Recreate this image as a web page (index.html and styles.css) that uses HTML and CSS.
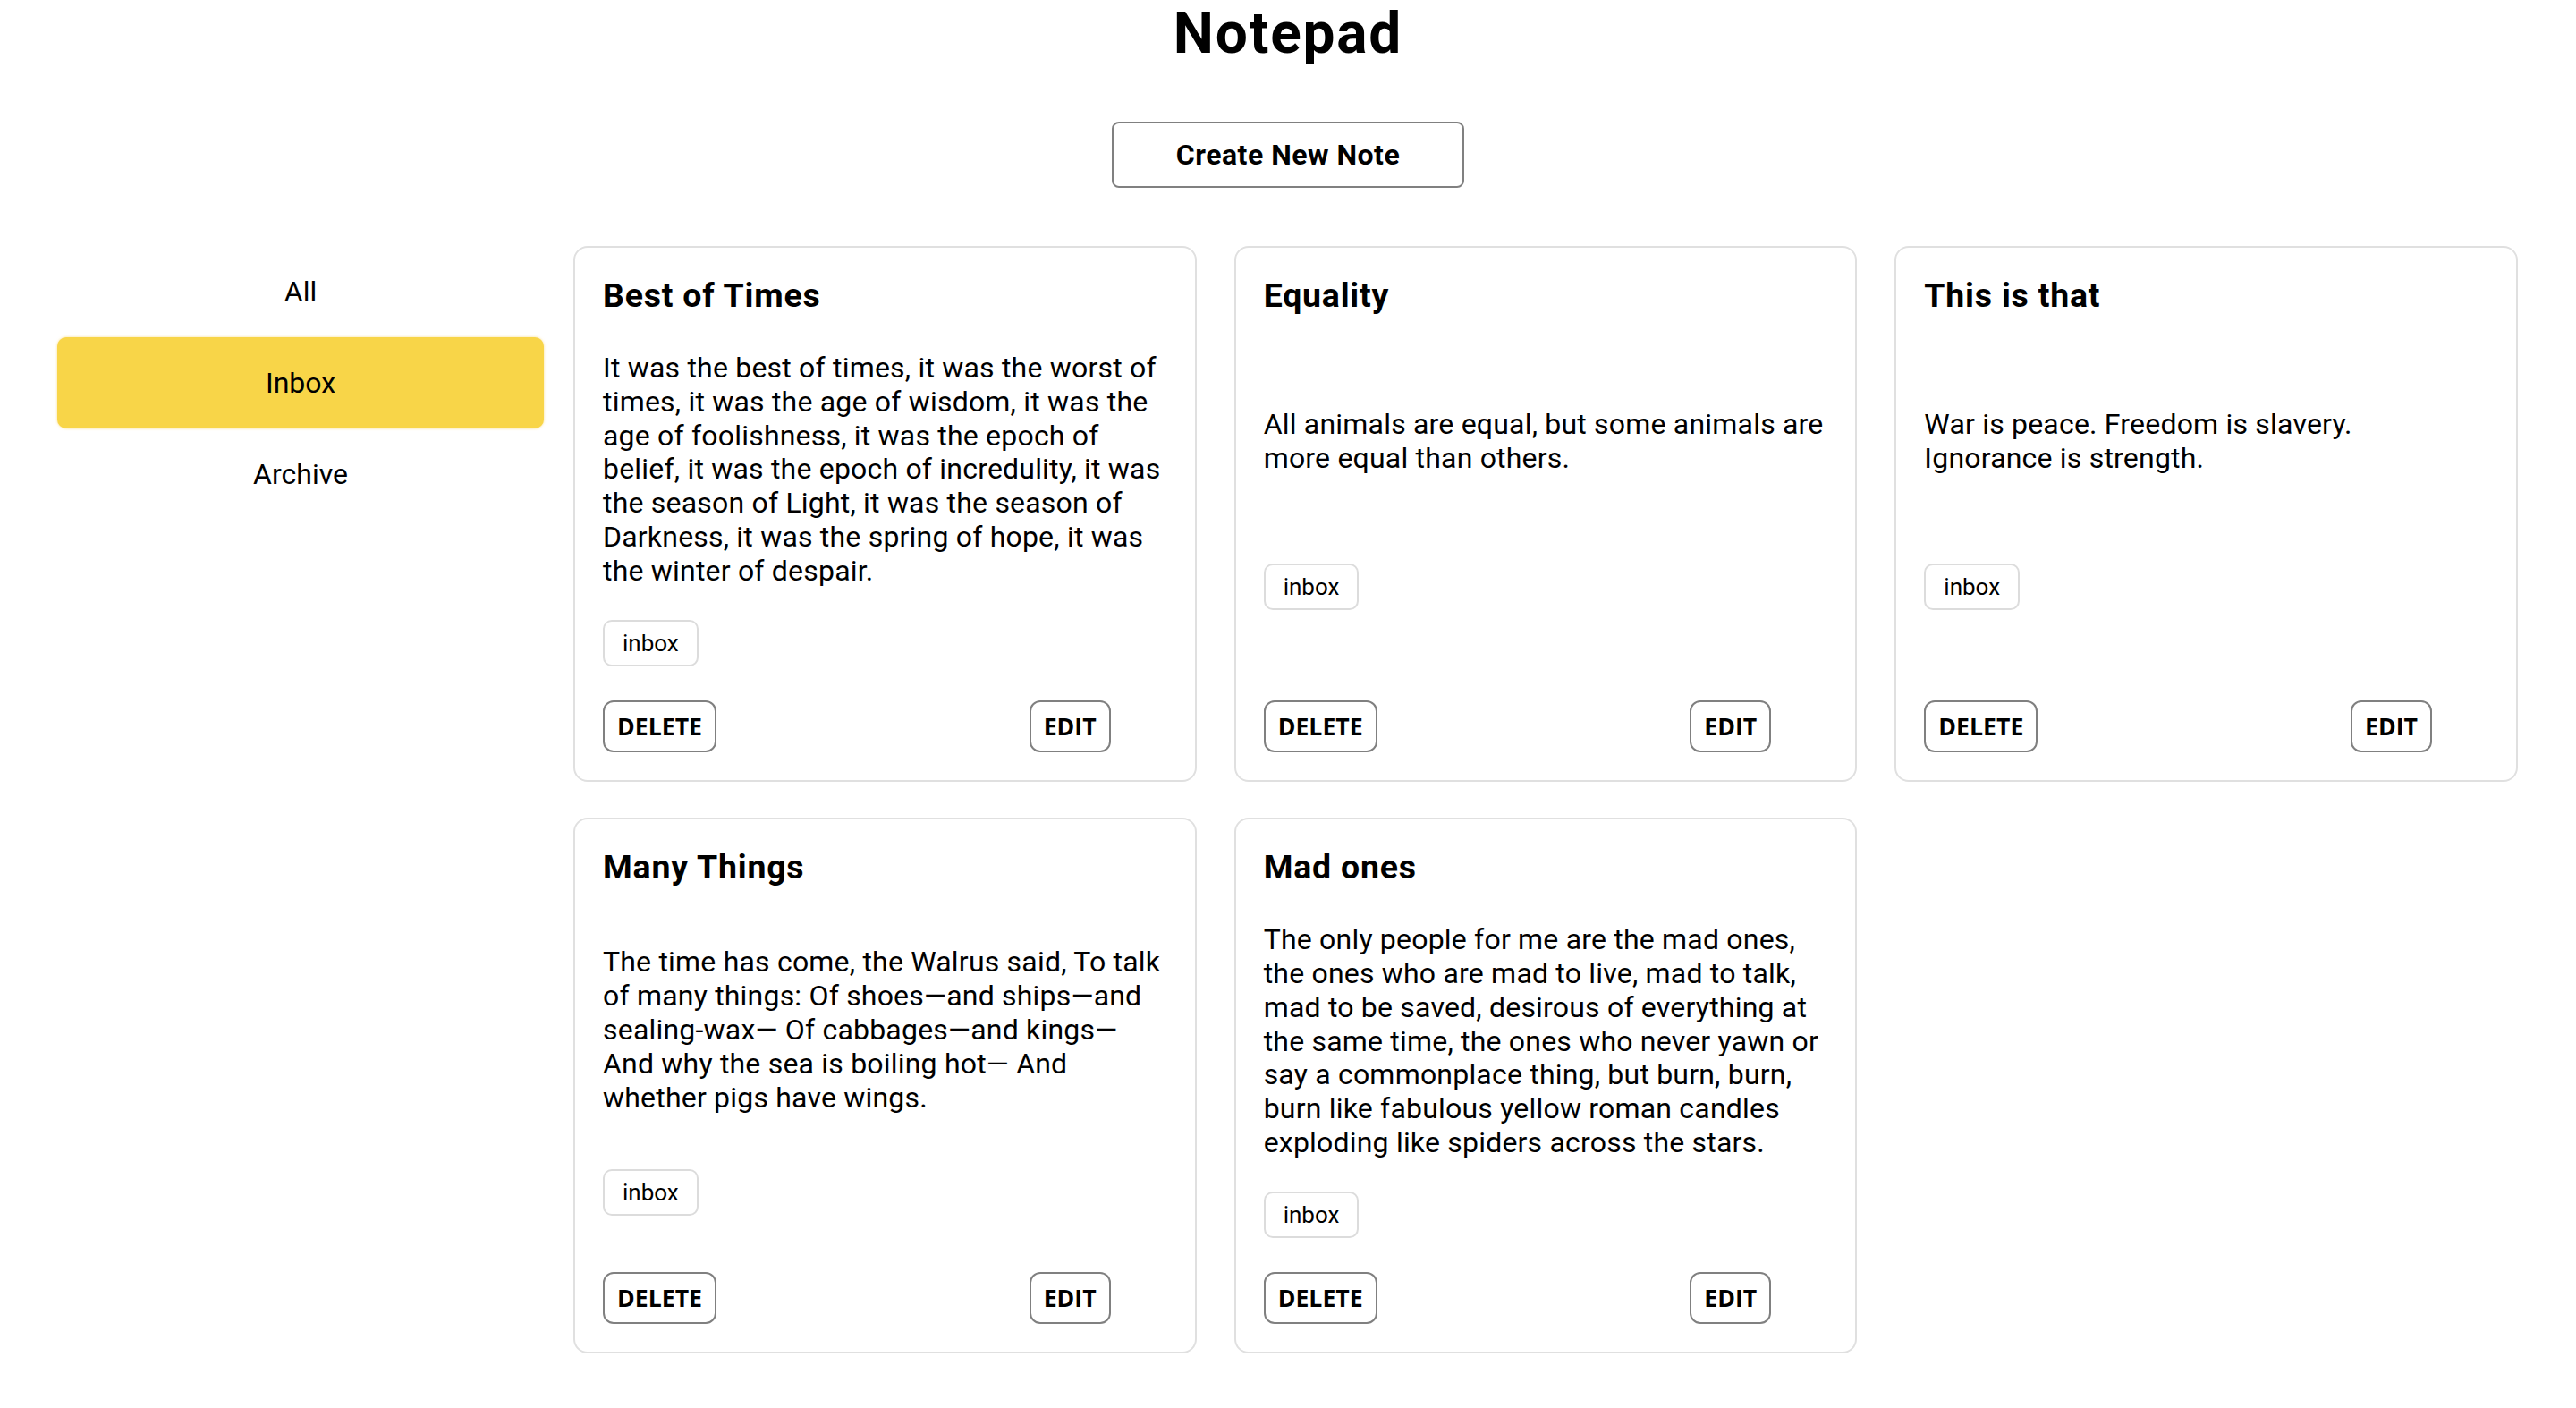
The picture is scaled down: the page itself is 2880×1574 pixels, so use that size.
FILE: index.html
```html
<!DOCTYPE html>
<html lang="en">
<head>
<meta charset="utf-8">
<title>Notepad</title>
<link rel="stylesheet" href="styles.css">
</head>
<body>
<header class="header">
  <h1 class="title">Notepad</h1>
  <button class="create-btn">Create New Note</button>
</header>
<main class="main">
  <nav class="sidebar">
    <div class="nav-item">All</div>
    <div class="nav-item active">Inbox</div>
    <div class="nav-item">Archive</div>
  </nav>
  <section class="notes">
    <article class="card">
      <h3 class="card-title">Best of Times</h3>
      <p class="card-text">It was the best of times, it was the worst of times, it was the age of wisdom, it was the age of foolishness, it was the epoch of belief, it was the epoch of incredulity, it was the season of Light, it was the season of Darkness, it was the spring of hope, it was the winter of despair.</p>
      <div class="tags"><span class="tag">inbox</span></div>
      <div class="card-actions"><button class="action-btn">DELETE</button><button class="action-btn">EDIT</button></div>
    </article>
    <article class="card">
      <h3 class="card-title">Equality</h3>
      <p class="card-text">All animals are equal, but some animals are more equal than others.</p>
      <div class="tags"><span class="tag">inbox</span></div>
      <div class="card-actions"><button class="action-btn">DELETE</button><button class="action-btn">EDIT</button></div>
    </article>
    <article class="card">
      <h3 class="card-title">This is that</h3>
      <p class="card-text">War is peace. Freedom is slavery.<br>Ignorance is strength.</p>
      <div class="tags"><span class="tag">inbox</span></div>
      <div class="card-actions"><button class="action-btn">DELETE</button><button class="action-btn">EDIT</button></div>
    </article>
    <article class="card">
      <h3 class="card-title">Many Things</h3>
      <p class="card-text">The time has come, the Walrus said, To talk of many things: Of shoes—and ships—and sealing-wax— Of cabbages—and kings— And why the sea is boiling hot— And whether pigs have wings.</p>
      <div class="tags"><span class="tag">inbox</span></div>
      <div class="card-actions"><button class="action-btn">DELETE</button><button class="action-btn">EDIT</button></div>
    </article>
    <article class="card">
      <h3 class="card-title">Mad ones</h3>
      <p class="card-text">The only people for me are the mad ones, the ones who are mad to live, mad to talk, mad to be saved, desirous of everything at the same time, the ones who never yawn or say a commonplace thing, but burn, burn, burn like fabulous yellow roman candles exploding like spiders across the stars.</p>
      <div class="tags"><span class="tag">inbox</span></div>
      <div class="card-actions"><button class="action-btn">DELETE</button><button class="action-btn">EDIT</button></div>
    </article>
  </section>
</main>
</body>
</html>
```

FILE: styles.css
```css
* {
  box-sizing: border-box;
}

body {
  margin: 0;
  font-family: Roboto, "Liberation Sans", sans-serif;
  color: #000;
  background: #fff;
}

.header {
  display: flex;
  flex-direction: column;
  align-items: center;
}

.title {
  margin: 0;
  font-size: 64px;
  font-weight: 700;
  line-height: 75px;
  letter-spacing: 1.8px;
}

.create-btn {
  margin-top: 61px;
  padding: 16px 70px;
  font-family: Roboto, "Liberation Sans", sans-serif;
  font-size: 32px;
  font-weight: 700;
  line-height: 38px;
  letter-spacing: 0.5px;
  color: #000;
  background: #fff;
  border: 2px solid #808080;
  border-radius: 8px;
}

.main {
  display: flex;
  gap: 33px;
  margin-top: 65px;
  padding: 0 65px 40px 64px;
}

.sidebar {
  flex: 0 0 544px;
  display: flex;
  flex-direction: column;
}

.nav-item {
  height: 102px;
  display: flex;
  align-items: center;
  justify-content: center;
  font-size: 32px;
  border-radius: 10px;
}

.nav-item.active {
  background: #f8d548;
  box-shadow: 0 0 3px rgba(248, 200, 60, 0.6);
}

.notes {
  flex: 1;
  display: grid;
  grid-template-columns: repeat(3, 1fr);
  column-gap: 42px;
  row-gap: 40px;
  align-content: start;
}

.card {
  display: flex;
  flex-direction: column;
  justify-content: space-between;
  padding: 31px;
  border: 2px solid #e0e0e0;
  border-radius: 16px;
  min-width: 0;
}

.card-title {
  margin: 0 0 41px;
  font-size: 37.44px;
  font-weight: 700;
  line-height: 44px;
  letter-spacing: 0.8px;
}

.card-text {
  margin: 0 0 35px;
  font-size: 32px;
  line-height: 37.8px;
  letter-spacing: 0.2px;
}

.tags {
  display: flex;
  margin-bottom: 38px;
}

.tag {
  display: inline-block;
  padding: 8px 20px;
  font-size: 26px;
  line-height: 32px;
  border: 2px solid #dcdcdc;
  border-radius: 10px;
}

.card-actions {
  width: 90%;
  display: flex;
  justify-content: space-between;
}

.action-btn {
  padding: 9px 14px;
  font-family: "Open Sans", "Liberation Sans", sans-serif;
  font-size: 26.67px;
  font-weight: 700;
  line-height: 36.6px;
  color: #000;
  background: #fff;
  border: 2px solid #808080;
  border-radius: 12px;
}
```
